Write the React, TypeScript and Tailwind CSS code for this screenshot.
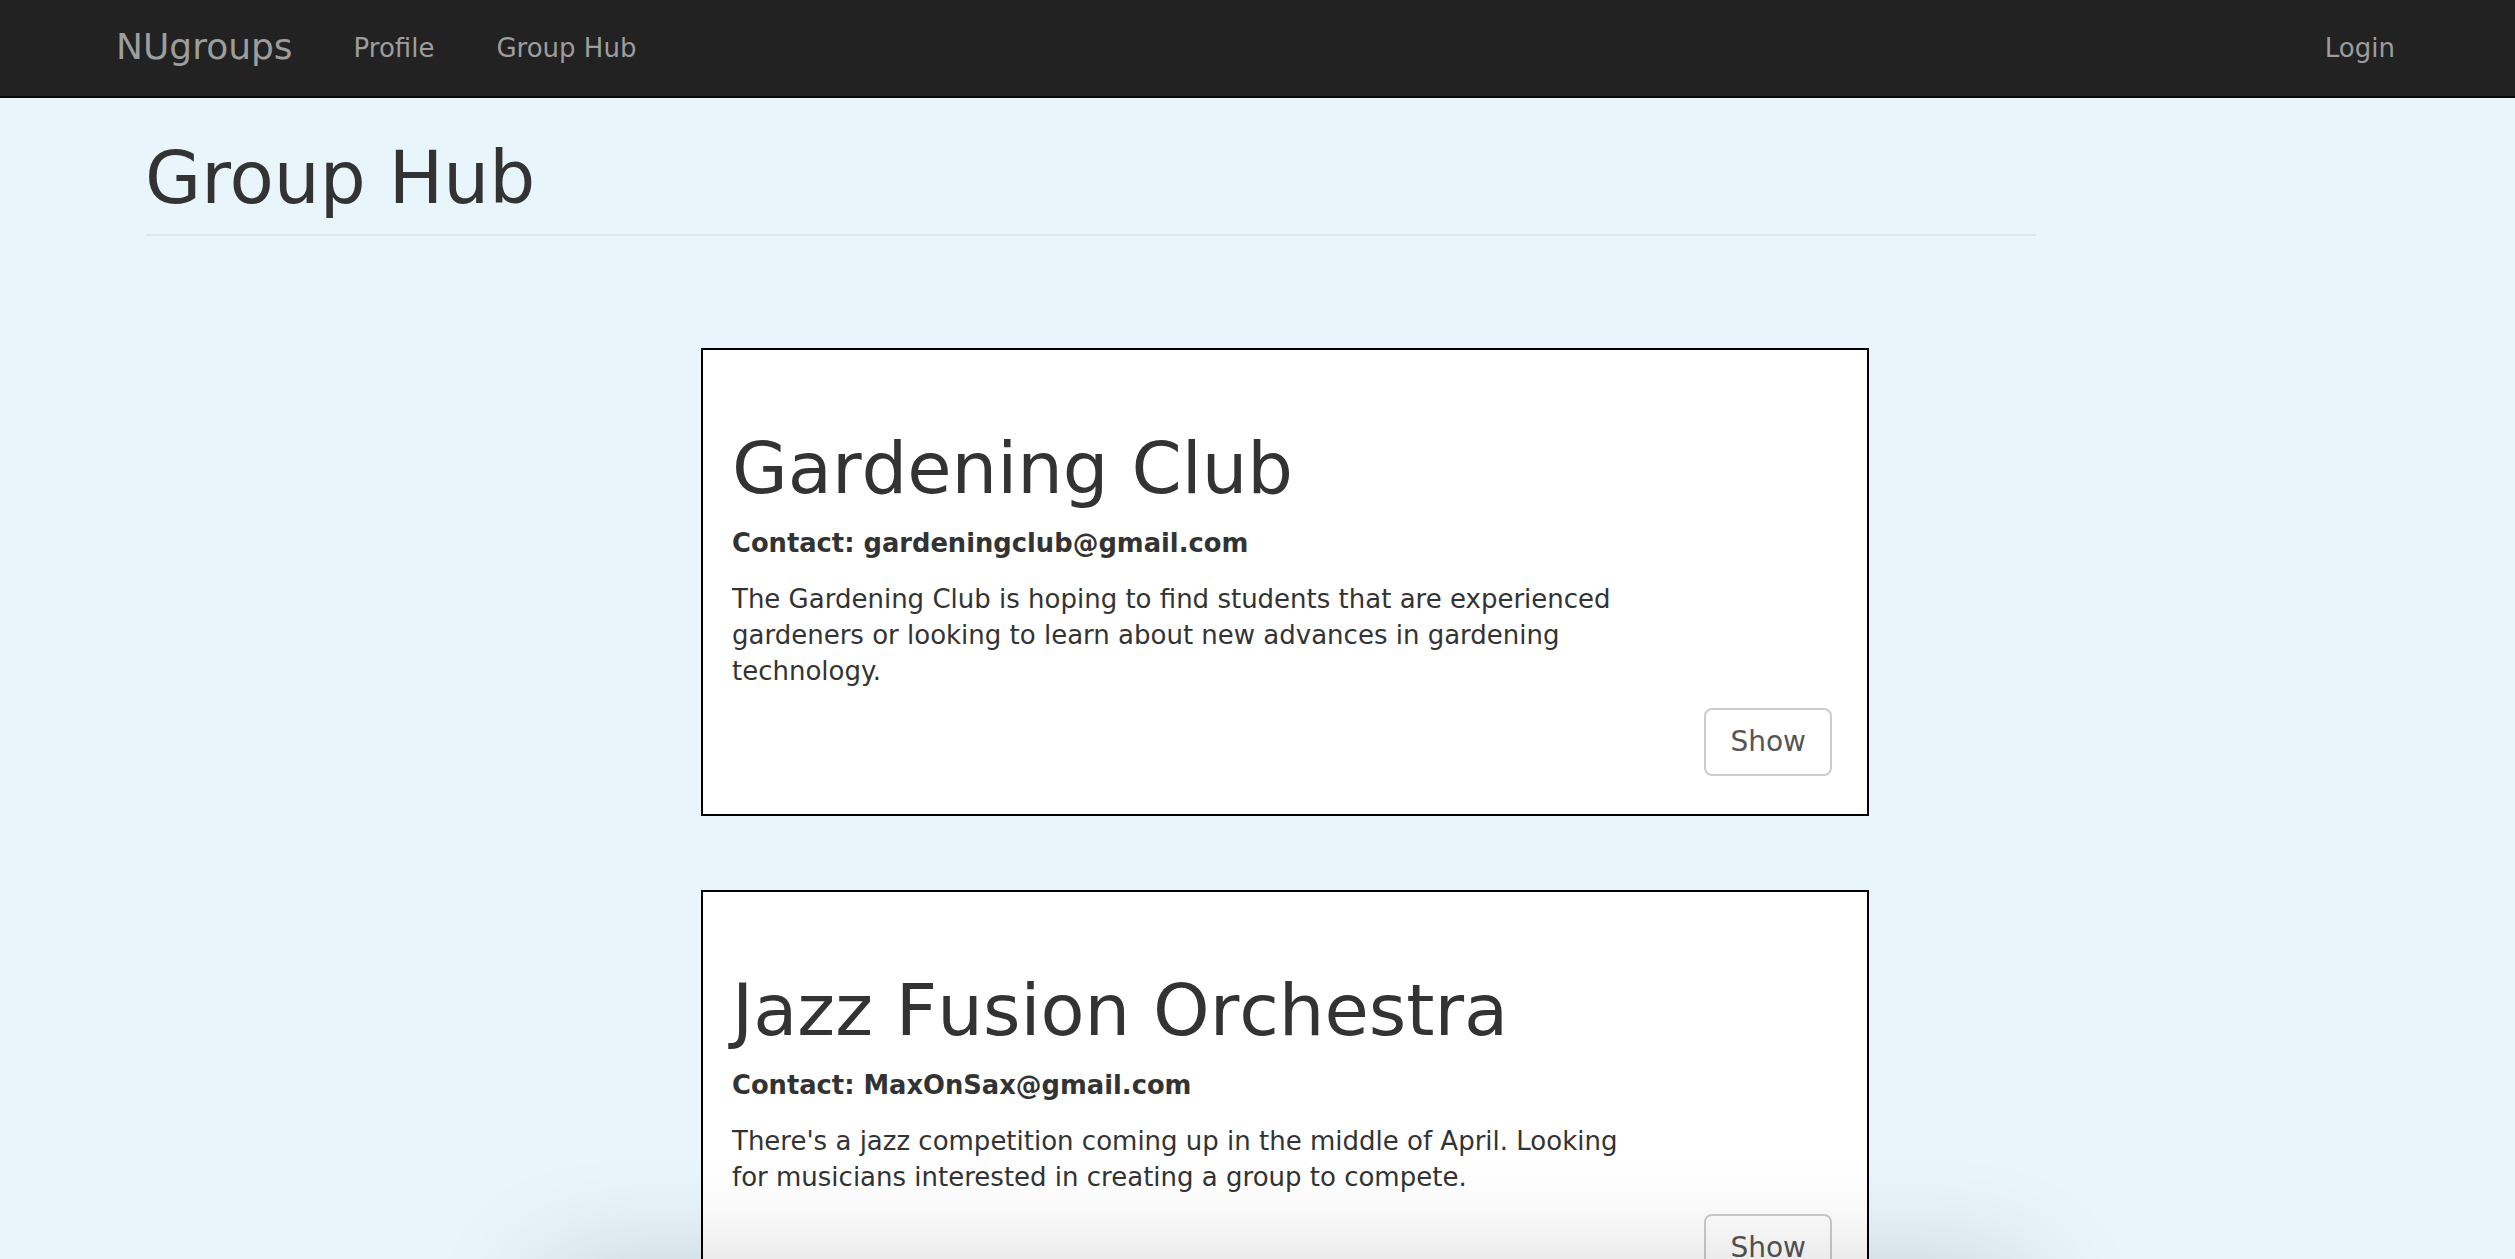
const groups = [
  {
    name: "Gardening Club",
    contact: "gardeningclub@gmail.com",
    description:
      "The Gardening Club is hoping to find students that are experienced gardeners or looking to learn about new advances in gardening technology.",
  },
  {
    name: "Jazz Fusion Orchestra",
    contact: "MaxOnSax@gmail.com",
    description:
      "There's a jazz competition coming up in the middle of April. Looking for musicians interested in creating a group to compete.",
  },
];

function Navbar() {
  return (
    <nav className="h-[98px] bg-[#222222] border-b-2 border-[#080808] flex items-start text-[#9d9d9d]">
      <a className="ml-[116px] mt-[23px] text-[36px] leading-[48px]">NUgroups</a>
      <a className="ml-[61px] mt-[30px] text-[26px] leading-[36px]">Profile</a>
      <a className="ml-[62px] mt-[30px] text-[26px] leading-[36px]">Group Hub</a>
      <a className="ml-auto mr-[120px] mt-[30px] text-[26px] leading-[36px]">Login</a>
    </nav>
  );
}

function GroupCard({ name, contact, description }: { name: string; contact: string; description: string }) {
  return (
    <div className="ml-[701px] w-[1168px] bg-white border-2 border-black pt-[78px] pl-[29px] pr-[35px] pb-[38px]">
      <h1 className="text-[72px] leading-[80px] text-[#333333] [font-kerning:none]">{name}</h1>
      <p className="mt-[17px] text-[25.75px] leading-[36px] font-bold text-[#333333]">Contact: {contact}</p>
      <p className="mt-[20px] w-[920px] text-[26px] leading-[36px] text-[#333333]">{description}</p>
      <div className="mt-[19px] flex justify-end">
        <button className="h-[68px] px-[24px] border-2 border-[#cccccc] rounded-[8px] bg-white text-[28px] leading-[36px] text-[#555555]">
          Show
        </button>
      </div>
    </div>
  );
}

export default function App() {
  return (
    <div className="h-screen overflow-hidden bg-[#e8f6fc] font-['DejaVu_Sans',sans-serif]">
      <Navbar />

      {/* Page header */}
      <div className="ml-[145px] w-[1891px] mt-[40px]">
        <h1 className="text-[72.5px] leading-[80px] text-[#333333]">Group Hub</h1>
        <div className="mt-[16px] ml-[1px] h-[2px] bg-[#e0e5e8]" />
      </div>

      <div className="mt-[112px] flex flex-col gap-[74px]">
        {groups.map((g) => (
          <GroupCard key={g.name} {...g} />
        ))}
      </div>

      {/* shadow from the element just below the fold */}
      <div
        aria-hidden
        className="fixed z-10 left-[545px] top-[1275px] w-[1480px] h-[300px] shadow-[0_0_120px_rgba(0,0,0,0.2)]"
      />
    </div>
  );
}
